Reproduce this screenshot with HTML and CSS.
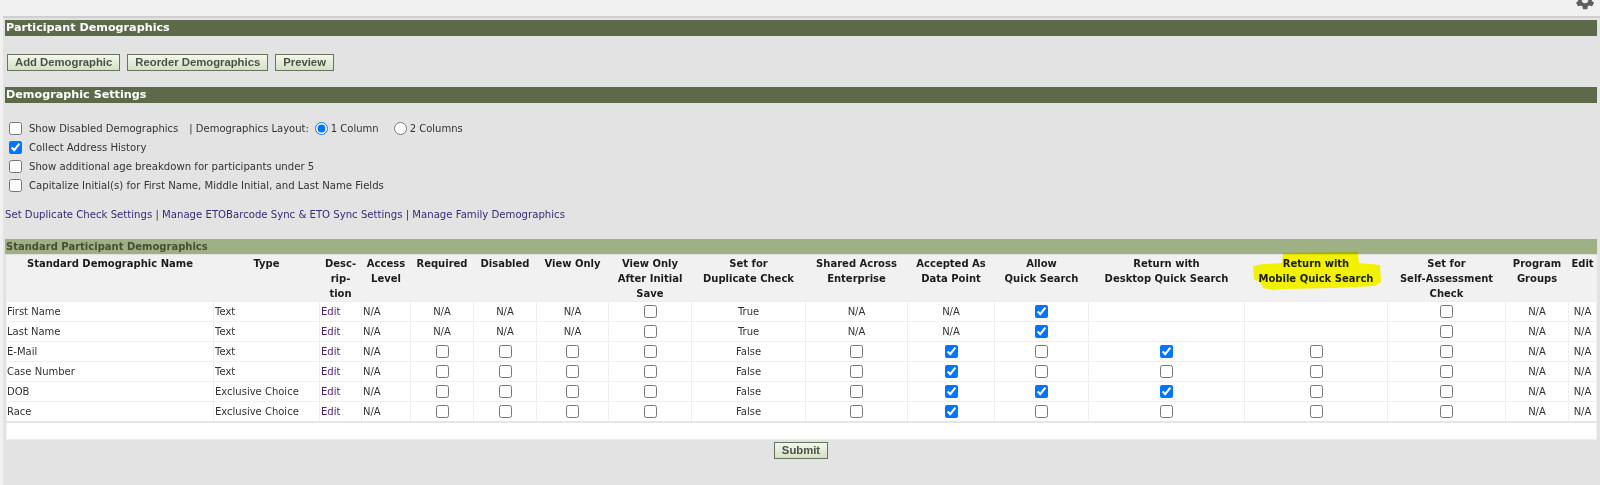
FILE: index.html

```html
<!DOCTYPE html>
<html lang="en">
<head>
<meta charset="UTF-8">
<title>Participant Demographics</title>
<link rel="stylesheet" href="styles.css">
</head>
<body>
<div class="topbar">
  <svg class="gear" width="22" height="22" viewBox="0 0 24 24"><path fill="#5f5f5f" d="M19.4 13c.1-.3.1-.7.1-1s0-.7-.1-1l2.1-1.6c.2-.2.2-.4.1-.6l-2-3.5c-.1-.2-.4-.3-.6-.2l-2.5 1c-.5-.4-1.1-.7-1.7-1l-.4-2.6c0-.3-.2-.5-.5-.5h-4c-.3 0-.5.2-.5.4l-.4 2.7c-.6.2-1.1.6-1.700 1l-2.500-1c-.2-.1-.5 0-.6.2l-2 3.500c-.1.2-.1.4.1.6L4.600 11c-.1.300-.1.700-.1 1s0 .7.1 1l-2.100 1.600c-.2.200-.2.400-.1.600l2 3.500c.1.200.4.300.6.200l2.500-1c.5.400 1.100.700 1.700 1l.4 2.600c0 .3.2.5.5.5h4c.3 0 .5-.2.5-.4l.4-2.700c.6-.2 1.100-.6 1.700-1l2.500 1c.2.1.5 0 .6-.2l2-3.500c.1-.2.1-.4-.1-.6zM12 15.500a3.500 3.500 0 1 1 0-7 3.500 3.500 0 0 1 0 7z"/></svg>
</div>
<div class="page">
  <h2 class="band">Participant Demographics</h2>
  <div class="buttons">
    <button class="btn">Add Demographic</button>
    <button class="btn">Reorder Demographics</button>
    <button class="btn">Preview</button>
  </div>
  <h2 class="band">Demographic Settings</h2>
  <div class="settings">
    <div class="setting first">
      <input type="checkbox"><span class="lbl">Show Disabled Demographics</span>
      <span class="layout">| Demographics Layout:</span>
      <input type="radio" name="cols" class="radio" checked><span class="radio-lbl">1 Column</span>
      <input type="radio" name="cols" class="radio radio-two"><span class="radio-lbl">2 Columns</span>
    </div>
    <div class="setting"><input type="checkbox" checked><span class="lbl">Collect Address History</span></div>
    <div class="setting"><input type="checkbox"><span class="lbl">Show additional age breakdown for participants under 5</span></div>
    <div class="setting"><input type="checkbox"><span class="lbl">Capitalize Initial(s) for First Name, Middle Initial, and Last Name Fields</span></div>
  </div>
  <p class="links"><a href="#">Set Duplicate Check Settings</a> | <a href="#">Manage ETOBarcode Sync &amp; ETO Sync Settings</a> | <a href="#">Manage Family Demographics</a></p>
  <h3 class="subband">Standard Participant Demographics</h3>
  <table class="grid">
    <colgroup>
      <col width="207"><col width="106"><col width="42"><col width="49"><col width="63"><col width="63"><col width="72"><col width="83"><col width="114"><col width="102"><col width="87"><col width="94"><col width="156"><col width="143"><col width="118"><col width="63"><col width="28">
    </colgroup>
    <thead>
      <tr>
        <th>Standard Demographic Name</th><th>Type</th><th>Desc-<br>rip-<br>tion</th><th>Access Level</th><th>Required</th><th>Disabled</th><th>View Only</th><th>View Only<br>After Initial<br>Save</th><th>Set for<br>Duplicate Check</th><th>Shared Across<br>Enterprise</th><th>Accepted As<br>Data Point</th><th>Allow<br>Quick Search</th><th>Return with<br>Desktop Quick Search</th>
        <th class="marked">
          <svg class="marker" width="128" height="38" viewBox="0 0 128 38"><path fill="#ffff00" d="M30 1L105 0L106 11L127 13L128 30L122 34L80 36L30 37L20 38L10 36L8 31L1 27L0 14L10 12L29 11z"/></svg>
          Return with<br>Mobile Quick Search
        </th>
        <th>Set for<br>Self-Assessment<br>Check</th><th>Program Groups</th><th>Edit</th>
      </tr>
    </thead>
    <tbody>
      <tr>
        <td>First Name</td><td>Text</td><td><a href="#">Edit</a></td><td>N/A</td>
        <td class="c">N/A</td><td class="c">N/A</td><td class="c">N/A</td><td class="c"><input type="checkbox"></td><td class="c">True</td><td class="c">N/A</td><td class="c">N/A</td><td class="c"><input type="checkbox" checked></td><td></td><td></td><td class="c"><input type="checkbox"></td><td class="c">N/A</td><td class="c">N/A</td>
      </tr>
      <tr>
        <td>Last Name</td><td>Text</td><td><a href="#">Edit</a></td><td>N/A</td>
        <td class="c">N/A</td><td class="c">N/A</td><td class="c">N/A</td><td class="c"><input type="checkbox"></td><td class="c">True</td><td class="c">N/A</td><td class="c">N/A</td><td class="c"><input type="checkbox" checked></td><td></td><td></td><td class="c"><input type="checkbox"></td><td class="c">N/A</td><td class="c">N/A</td>
      </tr>
      <tr>
        <td>E-Mail</td><td>Text</td><td><a href="#">Edit</a></td><td>N/A</td>
        <td class="c"><input type="checkbox"></td><td class="c"><input type="checkbox"></td><td class="c"><input type="checkbox"></td><td class="c"><input type="checkbox"></td><td class="c">False</td><td class="c"><input type="checkbox"></td><td class="c"><input type="checkbox" checked></td><td class="c"><input type="checkbox"></td><td class="c"><input type="checkbox" checked></td><td class="c"><input type="checkbox"></td><td class="c"><input type="checkbox"></td><td class="c">N/A</td><td class="c">N/A</td>
      </tr>
      <tr>
        <td>Case Number</td><td>Text</td><td><a href="#">Edit</a></td><td>N/A</td>
        <td class="c"><input type="checkbox"></td><td class="c"><input type="checkbox"></td><td class="c"><input type="checkbox"></td><td class="c"><input type="checkbox"></td><td class="c">False</td><td class="c"><input type="checkbox"></td><td class="c"><input type="checkbox" checked></td><td class="c"><input type="checkbox"></td><td class="c"><input type="checkbox"></td><td class="c"><input type="checkbox"></td><td class="c"><input type="checkbox"></td><td class="c">N/A</td><td class="c">N/A</td>
      </tr>
      <tr>
        <td>DOB</td><td>Exclusive Choice</td><td><a href="#">Edit</a></td><td>N/A</td>
        <td class="c"><input type="checkbox"></td><td class="c"><input type="checkbox"></td><td class="c"><input type="checkbox"></td><td class="c"><input type="checkbox"></td><td class="c">False</td><td class="c"><input type="checkbox"></td><td class="c"><input type="checkbox" checked></td><td class="c"><input type="checkbox" checked></td><td class="c"><input type="checkbox" checked></td><td class="c"><input type="checkbox"></td><td class="c"><input type="checkbox"></td><td class="c">N/A</td><td class="c">N/A</td>
      </tr>
      <tr>
        <td>Race</td><td>Exclusive Choice</td><td><a href="#">Edit</a></td><td>N/A</td>
        <td class="c"><input type="checkbox"></td><td class="c"><input type="checkbox"></td><td class="c"><input type="checkbox"></td><td class="c"><input type="checkbox"></td><td class="c">False</td><td class="c"><input type="checkbox"></td><td class="c"><input type="checkbox" checked></td><td class="c"><input type="checkbox"></td><td class="c"><input type="checkbox"></td><td class="c"><input type="checkbox"></td><td class="c"><input type="checkbox"></td><td class="c">N/A</td><td class="c">N/A</td>
      </tr>
      <tr class="spacer"><td colspan="17"></td></tr>
    </tbody>
  </table>
  <div class="submit-row"><button class="btn">Submit</button></div>
</div>
</body>
</html>
```

FILE: styles.css

```css
:root {
  --band-dark: #5c6a4a;
  --band-light: #9fb085;
  --page-bg: #e3e3e3;
  --top-bg: #f1f1f1;
  --line: #efefef;
  --link: #3b2a78;
}
html, body { height: 100%; }
body { background: var(--top-bg); color: #333; font-family: "DejaVu Sans", Verdana, sans-serif; font-size: 10.15px; margin: 0; overflow: hidden; }
.topbar { height: 16px; overflow: hidden; display: flex; justify-content: flex-end; padding-right: 4px; box-sizing: border-box; }
.gear { margin-top: -11px; }
.page { background: var(--page-bg); border-top: 2px solid #cfcfcf; margin-left: 3px; padding: 2px 3px 0 2px; height: 469px; box-sizing: border-box; }
.band { background: var(--band-dark); color: #fff; font-size: 11.2px; font-weight: bold; height: 15.5px; line-height: 15px; margin: 0; padding-left: 1px; }
.buttons { display: flex; gap: 7px; padding: 18px 0 16.5px 2px; }
.btn { background: linear-gradient(#f4f7ee, #d5dfc8); border: 1px solid #66745a; color: #4a5340; font-family: "Liberation Sans", Arial, sans-serif; font-size: 11.3px; font-weight: bold; height: 17px; line-height: 15px; padding: 0 7px; }
.settings { padding: 16px 0 0 4px; }
.setting { align-items: center; display: flex; height: 19px; }
.setting.first { font-size: 10px; }
.setting input { margin: 0; }
.lbl { margin-left: 7px; }
.layout { margin-left: 11px; }
.setting .radio { margin-left: 6px; }
.radio-lbl { margin-left: 3px; }
.setting .radio-two { margin-left: 15px; }
.links { margin: 13.5px 0 0 0; height: 31px; line-height: 14px; }
a { color: var(--link); text-decoration: none; }
.subband { background: var(--band-light); color: #434f36; font-size: 10px; font-weight: bold; height: 15px; line-height: 15px; margin: 0; padding-left: 1px; }
.grid { background: #fff; border-collapse: collapse; margin: 1px 0 0 1px; table-layout: fixed; width: 1590px; }
.grid th, .grid td { border: 1px solid var(--line); font-size: 10px; overflow: hidden; padding: 0 1px; white-space: nowrap; }
.grid th { background: var(--top-bg); color: #1c1c1c; font-weight: bold; height: 45px; line-height: 15px; text-align: center; vertical-align: top; white-space: normal; }
.grid td { height: 19px; }
.grid td:first-child { padding-left: 0; }
.grid td a { color: #4a1a7a; }
.grid td.c { text-align: center; }
.grid td input { margin: 0; vertical-align: middle; }
.grid .spacer td { height: 16px; border-top: 2px solid #e6e6e6; }
.marked { overflow: visible !important; position: relative; }
.marker { left: 8px; mix-blend-mode: multiply; position: absolute; top: -4px; }
.submit-row { display: flex; justify-content: center; padding: 2px 0 0 0; }
```
